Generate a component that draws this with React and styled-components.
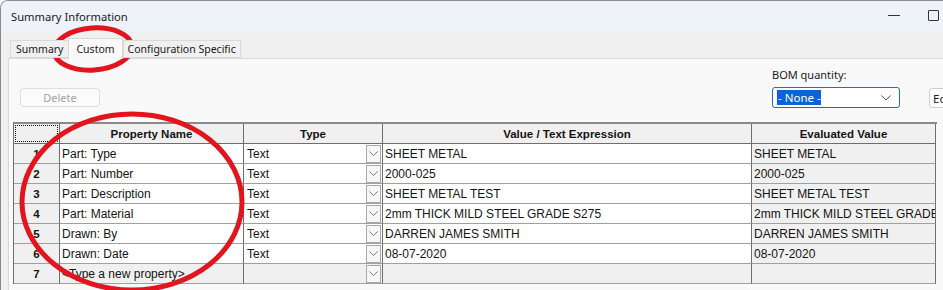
import React from "react";
import styled, { createGlobalStyle } from "styled-components";

const Global = createGlobalStyle`
  html, body { margin: 0; padding: 0; background: #ffffff; }
  body { width: 943px; height: 290px; overflow: hidden; font-family: "Noto Sans", "Open Sans", sans-serif; }
  #root { width: 943px; height: 290px; }
`;

const Window = styled.div`
  position: relative;
  width: 943px;
  height: 290px;
  box-sizing: border-box;
  border-top: 1px solid #8c8c8c;
  border-left: 1px solid #8c8c8c;
  border-top-left-radius: 8px;
  overflow: hidden;
  background: #f0f0f0;
  display: flex;
  flex-direction: column;
`;

const TitleBar = styled.div`
  height: 29px;
  flex-shrink: 0;
  background: #eef3f9;
  display: flex;
  align-items: center;
  padding-left: 10px;
  font-size: 11.2px;
  color: #1a1a1a;
`;

const Title = styled.div`
  flex: 1;
  padding-top: 1px;
`;

const WinControls = styled.div`
  display: flex;
  align-items: center;
  gap: 28px;
  margin-right: 4px;
`;

const MinGlyph = styled.div`
  width: 12px;
  height: 1px;
  background: #333;
`;

const MaxGlyph = styled.div`
  width: 9px;
  height: 9px;
  border: 1px solid #333;
  border-radius: 1px;
`;

const TabStrip = styled.div`
  height: 28px;
  flex-shrink: 0;
  display: flex;
  align-items: flex-end;
  padding-left: 9px;
`;

const Tab = styled.div`
  box-sizing: border-box;
  height: ${(p) => (p.$active ? "21px" : "18px")};
  padding: 0 ${(p) => p.$pad}px;
  margin-bottom: ${(p) => (p.$active ? "-1px" : "0")};
  background: ${(p) => (p.$active ? "#f9f9f9" : "#f0f0f0")};
  border: 1px solid #d9d9d9;
  border-bottom: ${(p) => (p.$active ? "none" : "1px solid #d9d9d9")};
  border-right: ${(p) => (p.$last || p.$active ? "1px solid #d9d9d9" : "none")};
  font-size: 10.5px;
  color: #1a1a1a;
  display: flex;
  align-items: center;
  position: relative;
  z-index: ${(p) => (p.$active ? 2 : 1)};
`;

const Panel = styled.div`
  flex: 1;
  margin-left: 7px;
  background: #f9f9f9;
  border-left: 1px solid #d9d9d9;
  border-top: 1px solid #d9d9d9;
  display: flex;
  flex-direction: column;
`;

const Toolbar = styled.div`
  height: 63px;
  flex-shrink: 0;
  display: flex;
  align-items: flex-start;
  padding-left: 11px;
`;

const DeleteButton = styled.div`
  margin-top: 29px;
  width: 80px;
  height: 19px;
  box-sizing: border-box;
  border: 1px solid #dedede;
  border-radius: 3px;
  background: #fbfbfb;
  color: #a3a3a3;
  font-size: 11px;
  display: flex;
  align-items: center;
  justify-content: center;
`;

const BomGroup = styled.div`
  margin-left: auto;
  width: 128px;
  display: flex;
  flex-direction: column;
  padding-top: 8px;
`;

const BomLabel = styled.div`
  font-size: 11px;
  color: #1a1a1a;
  height: 20px;
`;

const Select = styled.div`
  box-sizing: border-box;
  height: 21px;
  border: 1px solid #1a6fc4;
  border-radius: 3px;
  background: #ffffff;
  display: flex;
  align-items: center;
  padding-left: 4px;
  padding-right: 8px;
`;

const SelectedText = styled.span`
  background: #0a64d8;
  color: #ffffff;
  font-size: 11.5px;
  line-height: 15px;
  padding-left: 1px;
  flex: none;
`;

const Spacer = styled.div`
  flex: 1;
`;

const EditButton = styled.div`
  margin-top: 29px;
  margin-left: 29px;
  margin-right: -56px;
  width: 70px;
  flex-shrink: 0;
  height: 20px;
  box-sizing: border-box;
  border: 1px solid #d0d0d0;
  border-radius: 3px;
  background: #fdfdfd;
  font-size: 11.5px;
  color: #1a1a1a;
  display: flex;
  align-items: center;
  padding-left: 3px;
  white-space: nowrap;
`;

const Grid = styled.div`
  margin-left: 4px;
  width: 923px;
  display: grid;
  grid-template-columns: 46px 184px 139px 369px 184px;
  grid-auto-rows: 20px;
  border-top: 2px solid #8a8a8a;
  border-left: 1px solid #6e6e6e;
  font-family: "Liberation Sans", Arial, sans-serif;
  font-size: 12px;
  color: #141414;
`;

const GridCell = styled.div`
  box-sizing: border-box;
  background: ${(p) => (p.$gray ? "#f0f0f0" : "#ffffff")};
  border-right: 1px solid #6e6e6e;
  border-bottom: 1px solid ${(p) => (p.$head ? "#6e6e6e" : "#a0a0a0")};
  font-weight: ${(p) => (p.$bold ? "bold" : "normal")};
  font-size: ${(p) => (p.$bold ? "11.5px" : "12px")};
  display: flex;
  align-items: center;
  justify-content: ${(p) => (p.$center ? "center" : "flex-start")};
  padding: 0 ${(p) => (p.$center ? 0 : 2)}px;
  white-space: nowrap;
  overflow: hidden;
  min-width: 0;
`;

const FocusBox = styled.div`
  width: 100%;
  height: 15px;
  margin: 0 1px;
  border: 1px dotted #111;
`;

const TypeInner = styled.div`
  flex: 1;
  display: flex;
  align-items: center;
  justify-content: space-between;
  margin-right: -1px;
  padding-left: 1px;
`;

const DropBtn = styled.div`
  box-sizing: border-box;
  width: 15px;
  height: 18px;
  border: 1px solid #a8a8a8;
  background: #f7f7f7;
  display: flex;
  align-items: center;
  justify-content: center;
`;

const Overlay = styled.svg`
  position: absolute;
  left: 0;
  top: 0;
  pointer-events: none;
`;

const Chevron = ({ size = 9, color = "#6a6a6a" }) => (
  <svg width={size} height={size * 0.6} viewBox="0 0 10 6">
    <path d="M0.5 0.5 L5 5 L9.5 0.5" fill="none" stroke={color} strokeWidth="1" />
  </svg>
);

const rows = [
  ["Part: Type", "SHEET METAL"],
  ["Part: Number", "2000-025"],
  ["Part: Description", "SHEET METAL TEST"],
  ["Part: Material", "2mm THICK MILD STEEL GRADE S275"],
  ["Drawn: By", "DARREN JAMES SMITH"],
  ["Drawn: Date", "08-07-2020"],
];

const TypeField = ({ label, gray }) => (
  <GridCell $gray={gray}>
    <TypeInner>
      <span>{label}</span>
      <DropBtn>
        <Chevron />
      </DropBtn>
    </TypeInner>
  </GridCell>
);

export default function App() {
  return (
    <>
      <Global />
      <Window>
        <TitleBar>
          <Title>Summary Information</Title>
          <WinControls>
            <MinGlyph />
            <MaxGlyph />
          </WinControls>
        </TitleBar>
        <TabStrip>
          <Tab $pad={5}>Summary</Tab>
          <Tab $active $pad={7}>Custom</Tab>
          <Tab $last $pad={4}>Configuration Specific</Tab>
        </TabStrip>
        <Panel>
          <Toolbar>
            <DeleteButton>Delete</DeleteButton>
            <BomGroup>
              <BomLabel>BOM quantity:</BomLabel>
              <Select>
                <SelectedText>- None -</SelectedText>
                <Spacer />
                <Chevron size={10} color="#555" />
              </Select>
            </BomGroup>
            <EditButton>Edit List</EditButton>
          </Toolbar>
          <Grid>
            <GridCell $gray $head $center>
              <FocusBox />
            </GridCell>
            <GridCell $gray $head $center $bold>Property Name</GridCell>
            <GridCell $gray $head $center $bold>Type</GridCell>
            <GridCell $gray $head $center $bold>Value / Text Expression</GridCell>
            <GridCell $gray $head $center $bold>Evaluated Value</GridCell>
            {rows.map(([name, value], i) => (
              <React.Fragment key={name}>
                <GridCell $gray $center $bold>{i + 1}</GridCell>
                <GridCell>{name}</GridCell>
                <TypeField label="Text" />
                <GridCell>{value}</GridCell>
                <GridCell $gray>{value}</GridCell>
              </React.Fragment>
            ))}
            <GridCell $gray $center $bold>7</GridCell>
            <GridCell $gray>{"<Type a new property>"}</GridCell>
            <TypeField label="" gray />
            <GridCell $gray />
            <GridCell $gray />
          </Grid>
        </Panel>
        <Overlay width="943" height="290" viewBox="0 0 943 290">
          <ellipse cx="92" cy="48" rx="39" ry="21" transform="rotate(-4 92 48)" fill="none" stroke="#e2141d" strokeWidth="5" />
          <ellipse cx="131" cy="201" rx="110" ry="88" fill="none" stroke="#e2141d" strokeWidth="5" />
        </Overlay>
      </Window>
    </>
  );
}
